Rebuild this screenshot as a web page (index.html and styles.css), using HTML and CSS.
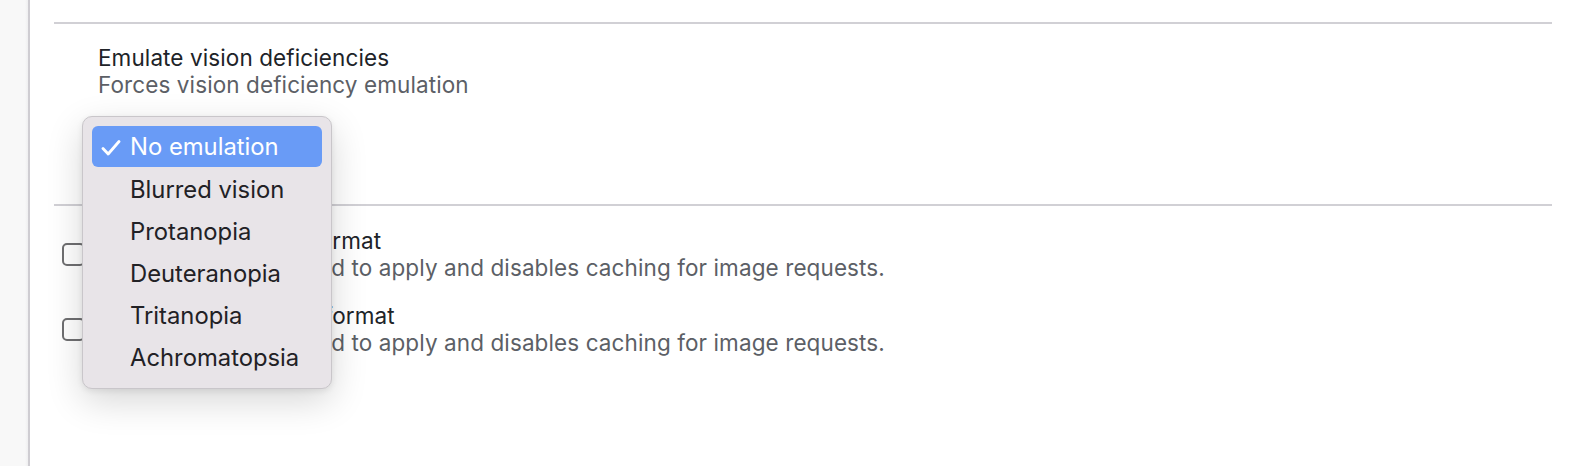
FILE: index.html
```html
<!DOCTYPE html>
<html lang="en">
<head>
<meta charset="utf-8">
<title>Rendering settings</title>
<link rel="stylesheet" href="styles.css">
</head>
<body>
<div class="app">
  <aside class="rail"></aside>
  <main class="content">
    <section class="setting vision">
      <div class="label">
        <div class="title">Emulate vision deficiencies</div>
        <div class="desc">Forces vision deficiency emulation</div>
      </div>
      <div class="select-wrap">
        <div class="select">No emulation</div>
        <ul class="menu">
          <li class="item selected"><svg class="check" viewBox="0 0 20 16" width="20" height="16"><path d="M2 8.5 L7.2 14 L18 1.5" fill="none" stroke="#fff" stroke-width="2.8" stroke-linecap="round" stroke-linejoin="round"/></svg>No emulation</li>
          <li class="item">Blurred vision</li>
          <li class="item">Protanopia</li>
          <li class="item">Deuteranopia</li>
          <li class="item">Tritanopia</li>
          <li class="item">Achromatopsia</li>
        </ul>
      </div>
    </section>
    <section class="setting checks">
      <label class="row">
        <span class="checkbox"></span>
        <span class="text">
          <span class="title">Disable AVIF image format</span>
          <span class="desc">Requires a page reload to apply and disables caching for image requests.</span>
        </span>
      </label>
      <label class="row">
        <span class="checkbox"></span>
        <span class="text">
          <span class="title">Disable WebP image format</span>
          <span class="desc">Requires a page reload to apply and disables caching for image requests.</span>
        </span>
      </label>
    </section>
  </main>
</div>
</body>
</html>
```
FILE: styles.css
```css
* { box-sizing: border-box; }
html, body { margin: 0; padding: 0; background: #ffffff; }
body {
  font-family: Inter, "Liberation Sans", Arial, sans-serif;
  width: 1576px;
  height: 466px;
  overflow: hidden;
}
.app {
  display: flex;
  height: 466px;
}
.rail {
  width: 30px;
  flex: none;
  background: linear-gradient(to right, #f8f8f8 0, #f8f8f8 25px, #efeff0 28px);
  border-right: 2px solid #cfcdd2;
}
.content {
  flex: 1;
  padding: 22px 24px 0 24px;
}
.setting {
  border-top: 2px solid #d1d0d5;
}
.vision {
  height: 182px;
  padding: 20px 0 0 44px;
}
.title {
  display: block;
  font-size: 22.5px;
  letter-spacing: 0.1px;
  line-height: 27px;
  color: #202328;
}
.desc {
  display: block;
  font-size: 22.5px;
  letter-spacing: 0.1px;
  line-height: 27px;
  color: #5c5f66;
}
.select-wrap {
  position: relative;
  margin: 34px 0 0 -16px;
}
.select {
  height: 30px;
  width: 200px;
  font-size: 20px;
  color: transparent;
}
.menu {
  position: absolute;
  top: -16px;
  left: 0;
  width: 250px;
  margin: 0;
  padding: 9px 9px 10px;
  list-style: none;
  background: #e8e4e8;
  border: 1px solid #c9c6ca;
  border-radius: 10px;
  box-shadow: 0 12px 36px rgba(0, 0, 0, 0.16), 0 2px 6px rgba(0, 0, 0, 0.08);
}
.item {
  position: relative;
  height: 42px;
  display: flex;
  align-items: center;
  padding-left: 38px;
  font-size: 23.8px;
  color: #222125;
  border-radius: 6px;
}
.item.selected {
  height: 41px;
  margin-bottom: 1px;
  background: #699bf6;
  color: #ffffff;
}
.check {
  position: absolute;
  left: 9px;
  top: 14px;
  width: 20px;
  height: 16px;
}
.checks {
  padding: 22px 0 0 8px;
  display: flex;
  flex-direction: column;
  gap: 22px;
}
.row {
  display: flex;
  align-items: center;
  gap: 13px;
}
.checkbox {
  width: 23px;
  height: 23px;
  flex: none;
  border: 2px solid #6f6f71;
  border-radius: 5px;
  background: #fff;
}
.row .title {
  line-height: 25px;
}
.row .desc {
  line-height: 27px;
  padding-top: 1px;
}
```
